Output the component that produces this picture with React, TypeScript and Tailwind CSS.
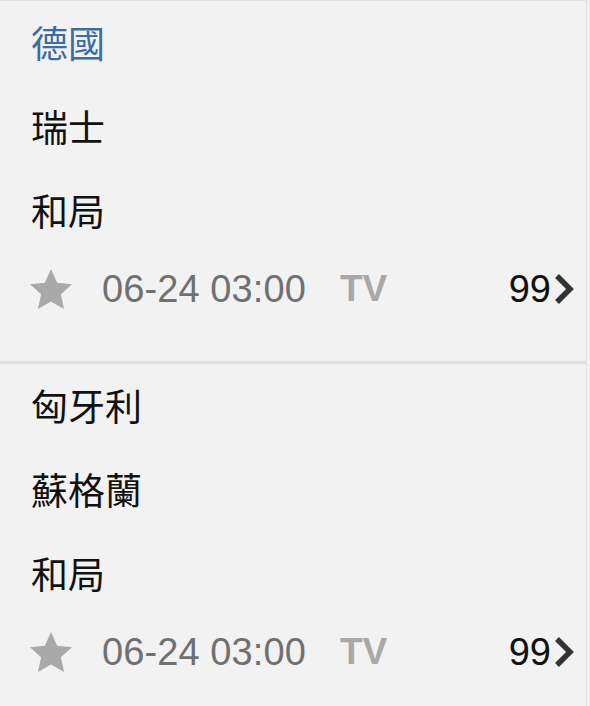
const cjk = "font-['Liberation_Sans','Noto_Sans_CJK_TC',sans-serif]";

function Star() {
  return (
    <svg viewBox="1.4 1.8 21.2 20.2" className="w-[42px] h-[40px] shrink-0" fill="#a9a9a9">
      <path d="M12 1.8l3.1 6.9 7.5.8-5.6 5.1 1.6 7.4L12 18.2 5.4 22l1.6-7.4L1.4 9.5l7.5-.8z" />
    </svg>
  );
}

function Chevron() {
  return (
    <svg viewBox="0 0 20 32" className="w-[20px] h-[32px] ml-[3px]" fill="none" stroke="#333" strokeWidth="5.5" strokeLinecap="butt" strokeLinejoin="miter">
      <path d="M3 3l13 13L3 29" />
    </svg>
  );
}

type Match = { home: string; away: string; result: string; homeWin?: boolean };

const matches: Match[] = [
  { home: "德國", away: "瑞士", result: "和局", homeWin: true },
  { home: "匈牙利", away: "蘇格蘭", result: "和局" },
];

function Block({ m, first }: { m: Match; first?: boolean }) {
  return (
    <div className={first ? "pt-[3px] pb-[39px]" : "pt-[3px]"}>
      <div className={`h-[84px] flex items-center pl-[31px] text-[37px] ${m.homeWin ? "text-[#3a6ca6]" : "text-[#111]"}`}>
        {m.home}
      </div>
      <div className="h-[84px] flex items-center pl-[31px] text-[37px] text-[#111]">{m.away}</div>
      <div className="h-[84px] flex items-center pl-[31px] text-[37px] text-[#111]">{m.result}</div>
      <div className="h-[66px] flex items-center pl-[30px] pr-[12px]">
        <Star />
        <span className="ml-[30px] text-[38px] text-[#707070] tracking-[0.1px]">06-24 03:00</span>
        <span className="ml-[34px] text-[37px] font-bold text-[#a8a8a8]">TV</span>
        <span className="ml-auto flex items-center">
          <span className="text-[38px] text-[#111]">99</span>
          <Chevron />
        </span>
      </div>
    </div>
  );
}

export default function App() {
  return (
    <div className={`w-[590px] h-[706px] overflow-hidden bg-[#f2f2f2] ${cjk}`}>
      <div className="w-[587px] h-full border-t border-r border-[#e2e2e2]">
        <Block m={matches[0]} first />
        <div className="h-[3px] bg-[#dfdfdf]" />
        <Block m={matches[1]} />
      </div>
    </div>
  );
}
